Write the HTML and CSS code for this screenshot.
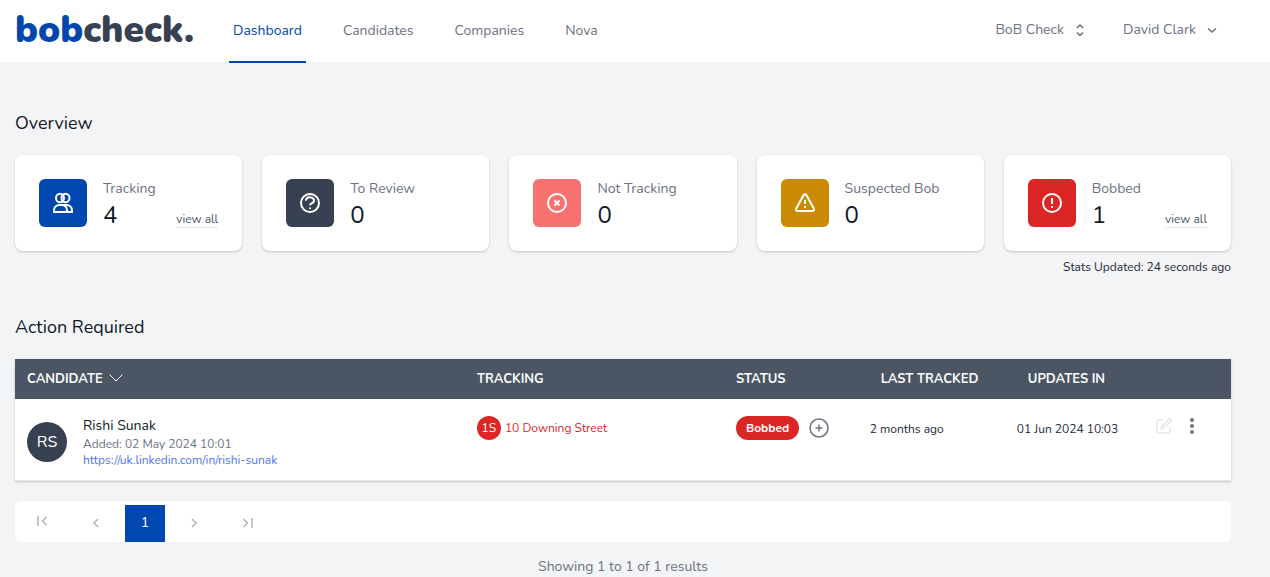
FILE: index.html
```html
<!DOCTYPE html>
<html lang="en">
<head>
<meta charset="utf-8">
<meta name="viewport" content="width=device-width, initial-scale=1">
<title>Dashboard - bobcheck</title>
<link rel="stylesheet" href="styles.css">
</head>
<body>
<header class="topbar">
  <a class="logo" href="#"><span class="logo-blue">bob</span>check.</a>
  <nav class="nav">
    <a class="nav-link active" href="#">Dashboard</a>
    <a class="nav-link" href="#">Candidates</a>
    <a class="nav-link" href="#">Companies</a>
    <a class="nav-link" href="#">Nova</a>
  </nav>
  <div class="account">
    <button class="menu-button" type="button">BoB Check
      <svg class="icon-sm" viewBox="0 0 16 16"><path d="M5 6l3-3 3 3M5 10.500l3 3 3-3"/></svg>
    </button>
    <button class="menu-button" type="button">David Clark
      <svg class="icon-sm" viewBox="0 0 16 16"><path d="M4 6.500l4 3.500 4-3.500"/></svg>
    </button>
  </div>
</header>

<main class="content">
  <h2 class="title">Overview</h2>
  <section class="cards">
    <article class="card">
      <div class="card-icon blue"><svg viewBox="0 0 22 22"><ellipse cx="8" cy="6" rx="4" ry="4.200"/><ellipse cx="13.500" cy="6" rx="4" ry="4.200"/><path d="M2 20v-1.500a5.500 5 0 0 1 5.500-5.500h2a5.500 5 0 0 1 5.500 5.500v1.500zM10 13h4.500a5.500 5 0 0 1 5.500 5.500v1.500h-5"/></svg></div>
      <div class="card-text"><span class="label">Tracking</span><span class="value">4</span></div>
      <a class="view" href="#">view all</a>
    </article>
    <article class="card">
      <div class="card-icon dark"><svg viewBox="0 0 22 22"><circle cx="11" cy="11" r="9"/><path d="M7 8.600a4 3.200 0 1 1 6 2.600c-1.200.6-2 .8-2 2M11 15.500v1.500"/></svg></div>
      <div class="card-text"><span class="label">To Review</span><span class="value">0</span></div>
    </article>
    <article class="card">
      <div class="card-icon pink"><svg viewBox="0 0 22 22"><circle cx="11" cy="11" r="9"/><path d="M8.500 8.500l5 5M13.500 8.500l-5 5"/></svg></div>
      <div class="card-text"><span class="label">Not Tracking</span><span class="value">0</span></div>
    </article>
    <article class="card">
      <div class="card-icon amber"><svg viewBox="0 0 22 22"><path d="M9.700 3L2.200 16.500a1.600 1.600 0 0 0 1.400 2.500h14.800a1.600 1.600 0 0 0 1.400-2.500L12.300 3a1.500 1.500 0 0 0-2.600 0zM11 8v4M11 14v2"/></svg></div>
      <div class="card-text"><span class="label">Suspected Bob</span><span class="value">0</span></div>
    </article>
    <article class="card">
      <div class="card-icon red"><svg viewBox="0 0 22 22"><circle cx="11" cy="11" r="9"/><path d="M11 6v6M11 14v2"/></svg></div>
      <div class="card-text"><span class="label">Bobbed</span><span class="value">1</span></div>
      <a class="view" href="#">view all</a>
    </article>
  </section>
  <p class="updated">Stats Updated: 24 seconds ago</p>

  <h2 class="title">Action Required</h2>
  <table class="table">
    <colgroup><col class="c-candidate"><col class="c-tracking"><col class="c-status"><col class="c-last"><col class="c-updates"><col></colgroup>
    <thead>
      <tr>
        <th><button class="sort" type="button">CANDIDATE <svg class="sort-icon" viewBox="0 0 14 14"><path d="M0.500 2.500L7 9l6.500-6.500"/></svg></button></th>
        <th>TRACKING</th>
        <th>STATUS</th>
        <th class="inset">LAST TRACKED</th>
        <th class="inset">UPDATES IN</th>
        <th></th>
      </tr>
    </thead>
    <tbody>
      <tr>
        <td>
          <div class="person">
            <span class="avatar">RS</span>
            <div class="person-text">
              <span class="name">Rishi Sunak</span>
              <span class="added">Added: 02 May 2024 10:01</span>
              <a class="profile" href="#">https://uk.linkedin.com/in/rishi-sunak</a>
            </div>
          </div>
        </td>
        <td><div class="line company"><span class="badge">1S</span>10 Downing Street</div></td>
        <td>
          <div class="line status">
            <span class="pill">Bobbed</span>
            <button class="icon-button" type="button" aria-label="Add"><svg class="add-icon" viewBox="0 0 20 20"><circle cx="10" cy="10" r="9"/><path d="M6.500 10h7M10 6.500v7"/></svg></button>
          </div>
        </td>
        <td><div class="line date">2 months ago</div></td>
        <td><div class="line date">01 Jun 2024 10:03</div></td>
        <td>
          <div class="actions">
            <button class="icon-button" type="button" aria-label="Edit"><svg class="edit-icon" viewBox="0 0 16 16"><path d="M7 2H3a2 2 0 0 0-2 2v9a2 2 0 0 0 2 2h9a2 2 0 0 0 2-2V9.500M12.600 1.400a1.400 1.400 0 0 1 2 2L8 10l-3 1 .8-2.800z"/></svg></button>
            <button class="icon-button" type="button" aria-label="More"><svg class="more-icon" viewBox="0 0 4 16"><circle cx="2" cy="2" r="2"/><circle cx="2" cy="8" r="2"/><circle cx="2" cy="14" r="2"/></svg></button>
          </div>
        </td>
      </tr>
    </tbody>
  </table>

  <nav class="pager" aria-label="Pages">
    <button class="page first" type="button" aria-label="First"><svg viewBox="0 0 12 12"><path d="M2 1v10M10.500 2L6.500 6l4 4"/></svg></button>
    <button class="page" type="button" aria-label="Previous"><svg viewBox="0 0 12 12"><path d="M8 2L4 6l4 4"/></svg></button>
    <button class="page current" type="button">1</button>
    <button class="page" type="button" aria-label="Next"><svg viewBox="0 0 12 12"><path d="M4 2l4 4-4 4"/></svg></button>
    <button class="page" type="button" aria-label="Last"><svg viewBox="0 0 12 12"><path d="M1.500 2l4 4-4 4M10 1v10"/></svg></button>
  </nav>
  <p class="results">Showing 1 to 1 of 1 results</p>
</main>
</body>
</html>
```
FILE: styles.css
```css
* { box-sizing: border-box; }
body {
  margin: 0;
  background: #f3f4f6;
  color: #111827;
  font-family: Nunito, Lato, sans-serif;
  font-size: 14px;
  line-height: 20px;
}
h2, p { margin: 0; font-weight: 400; }
a { color: inherit; text-decoration: none; }
button { border: 0; padding: 0; background: none; color: inherit; font: inherit; cursor: pointer; }
svg { display: block; fill: none; stroke: currentColor; }

.topbar {
  display: flex;
  height: 62px;
  padding: 0 50px 0 15px;
  background: #fff;
  color: #6b7280;
}
.logo {
  width: 174px;
  margin-right: 40px;
  color: #374151;
  font-size: 37px;
  font-weight: 900;
  line-height: 60px;
}
.logo-blue { color: #0047b1; }
.nav { display: flex; gap: 33px; }
.nav-link { height: 63px; padding: 0 4px; line-height: 61px; border-bottom: 2px solid transparent; }
.nav-link.active { border-color: #0047b1; color: #0047b1; }
.account { display: flex; gap: 35px; margin-left: auto; padding-bottom: 3px; }
.menu-button { display: flex; align-items: center; gap: 8px; }
.icon-sm { width: 16px; height: 16px; stroke-width: 1.500; }

.content { padding: 47px 39px 0 15px; }
.title { font-size: 18px; line-height: 28px; }
.cards { display: grid; grid-template-columns: repeat(5, 1fr); gap: 20px; margin-top: 18px; }
.card {
  display: flex;
  height: 96px;
  padding: 24px;
  background: #fff;
  border-radius: 8px;
  box-shadow: 0 1px 3px rgba(0, 0, 0, .1), 0 1px 2px rgba(0, 0, 0, .1);
}
.card-icon { display: grid; place-items: center; width: 48px; height: 48px; border-radius: 6px; color: #fff; }
.card-icon svg { width: 22px; height: 22px; stroke-width: 2; }
.blue { background: #0047b1; }
.dark { background: #374151; }
.pink { background: #f87171; }
.amber { background: #ca8a04; }
.red { background: #dc2626; }
.card-text { display: flex; flex-direction: column; margin-left: 16px; white-space: nowrap; }
.label { color: #6b7280; }
.value { font-size: 24px; line-height: 32px; }
.view {
  align-self: flex-end;
  margin: 0 0 -1px auto;
  color: #4b5563;
  font-size: 12px;
  line-height: 16px;
  border-bottom: 1px solid #e5e7eb;
}
.updated { margin-top: 8px; font-size: 12px; line-height: 16px; text-align: right; color: #1f2937; }
.updated + .title { margin-top: 38px; }

.table {
  width: 100%;
  margin-top: 18px;
  table-layout: fixed;
  border-collapse: collapse;
  background: #fff;
  font-size: 12px;
  box-shadow: 0 1px 3px rgba(0, 0, 0, .1), 0 1px 2px rgba(0, 0, 0, .1);
}
.c-candidate { width: 37%; }
.c-tracking { width: 21.300%; }
.c-status { width: 11%; }
.c-last { width: 12.100%; }
.c-updates { width: 11.400%; }
th { height: 40px; padding: 0 12px; background: #4b5563; color: #f9fafb; font-size: 13px; font-weight: 700; text-align: left; white-space: nowrap; }
th.inset { padding-left: 23px; }
.sort { display: flex; align-items: center; gap: 6px; }
.sort-icon { width: 14px; height: 14px; }
td { height: 81px; padding: 17px 12px 0; vertical-align: top; white-space: nowrap; border-bottom: 1px solid #e5e7eb; }
.line { display: flex; align-items: center; height: 24px; color: #1f2937; }
.line.date { height: 26px; }
.person { display: flex; align-items: center; gap: 16px; }
.avatar { display: grid; place-items: center; width: 40px; height: 40px; border-radius: 50%; background: #374151; color: #fff; font-size: 16px; }
.person-text { display: flex; flex-direction: column; line-height: 16px; }
.name { font-size: 14px; line-height: 20px; }
.added { color: #6b7280; }
.profile { color: #4f75f0; }
.line.company { gap: 4px; color: #dc2626; }
.badge { display: grid; place-items: center; width: 24px; height: 24px; border-radius: 50%; background: #dc2626; color: #fff; }
.status { gap: 10px; }
.pill { padding: 0 10px; border-radius: 12px; background: #dc2626; color: #fff; font-weight: 700; line-height: 24px; }
.icon-button { color: #6b7280; }
.add-icon { width: 20px; height: 20px; stroke-width: 1.500; }
.actions { display: flex; align-items: center; gap: 18px; height: 20px; padding-left: 1px; }
.edit-icon { width: 16px; height: 16px; stroke-width: 1.500; color: #e5e7eb; }
.more-icon { width: 4px; height: 16px; fill: currentColor; stroke: none; }

.pager { display: flex; align-items: flex-end; gap: 14px; height: 41px; margin-top: 20px; padding-left: 7px; background: #fff; border-radius: 6px; }
.page { display: grid; place-items: center; width: 40px; height: 37px; color: #b5b5b5; }
.page svg { width: 12px; height: 12px; stroke-width: 1.500; }
.page.first { height: 41px; }
.page.current { margin: 0 -5px; background: #0047b1; color: #fff; }
.results { margin-top: 15px; color: #6b7280; text-align: center; }
```
